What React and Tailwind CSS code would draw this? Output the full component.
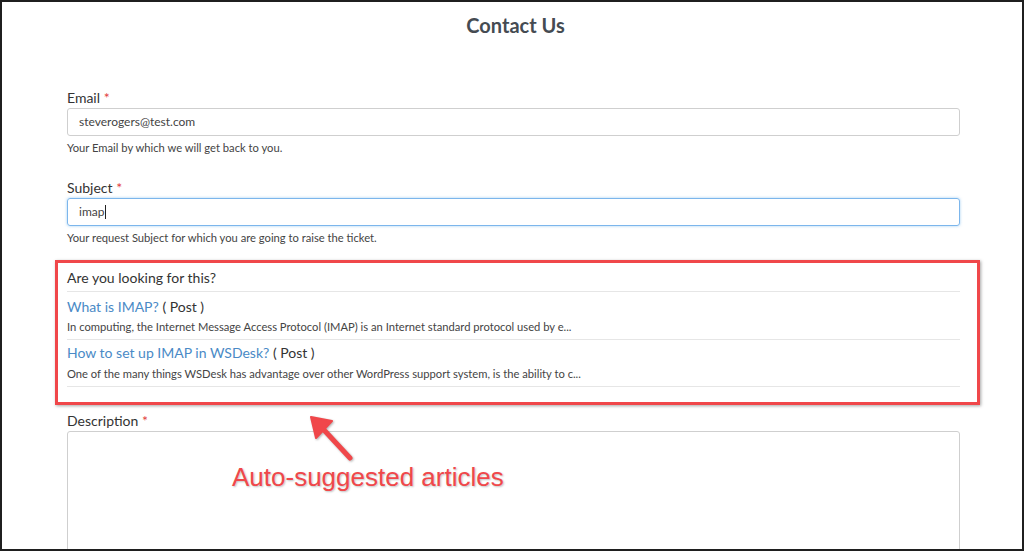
import React from "react";

const font = { fontFamily: "Lato, 'Open Sans', sans-serif" };

function Label({ children, className = "" }) {
  return (
    <div className={"text-[14px] leading-[18px] text-[#333] " + className}>
      {children} <span className="text-[#e2413f]">*</span>
    </div>
  );
}

function Help({ children, className = "" }) {
  return <div className={"text-[11.2px] leading-[16px] text-[#444] " + className}>{children}</div>;
}

export default function App() {
  return (
    <div
      className="relative w-[1024px] h-[551px] overflow-hidden bg-white border-2 border-[#1f1f1f] box-border"
      style={font}
    >
      <div className="pl-[65px] pr-[62px] pt-[10px]">
        <h1 className="text-center text-[20px] leading-[26px] font-bold text-[#454b52] pl-[4px]">Contact Us</h1>

        <Label className="mt-[51px]">Email</Label>
        <div className="mt-[1px] h-[28px] border border-[#cfcfcf] rounded-[3px] flex items-center pl-[11px] text-[12px] text-[#444]">
          steverogers@test.com
        </div>
        <Help className="mt-[4px]">Your Email by which we will get back to you.</Help>

        <Label className="mt-[23px]">Subject</Label>
        <div className="mt-[1px] h-[28px] border border-[#7cb6ec] rounded-[3px] shadow-[0_0_3px_rgba(102,175,233,0.6)] flex items-center pl-[11px] text-[12px] text-[#444]">
          imap<span className="inline-block w-[1px] h-[14px] bg-[#222] ml-[1px]"></span>
        </div>
        <Help className="mt-[4px]">Your request Subject for which you are going to raise the ticket.</Help>

        <div className="mt-[23px]">
          <div className="text-[14px] leading-[18px] text-[#333] pb-[4px] border-b border-[#e6e6e6]">
            Are you looking for this?
          </div>
          <div className="pt-[6px] pb-[4px] border-b border-[#e6e6e6]">
            <div className="text-[14px] leading-[18px] text-[#333]">
              <span className="text-[#4a8ac6]">What is IMAP?</span> ( Post )
            </div>
            <Help className="mt-[3px]">
              In computing, the Internet Message Access Protocol (IMAP) is an Internet standard protocol used by e...
            </Help>
          </div>
          <div className="pt-[4px] pb-[4px] border-b border-[#e6e6e6]">
            <div className="text-[14px] leading-[18px] text-[#333]">
              <span className="text-[#4a8ac6]">How to set up IMAP in WSDesk?</span> ( Post )
            </div>
            <Help className="mt-[4px]">
              One of the many things WSDesk has advantage over other WordPress support system, is the ability to c...
            </Help>
          </div>
        </div>

        <Label className="mt-[25px]">Description</Label>
        <div className="mt-[1px] h-[160px] border border-[#cfcfcf] rounded-[3px]"></div>
      </div>

      {/* annotation overlay */}
      <div className="absolute left-[53px] top-[258px] w-[925px] h-[145px] border-[3px] border-[#f0474a] shadow-[1px_1px_3px_rgba(0,0,0,0.35)]"></div>

      <svg className="absolute left-0 top-0" width="1020" height="547" viewBox="2 2 1020 547">
        <g style={{ filter: "drop-shadow(1px 1px 1px rgba(0,0,0,0.3))" }}>
          <line x1="324" y1="430" x2="350" y2="458" stroke="#f0474a" strokeWidth="5" strokeLinecap="round" />
          <polygon points="311,417 332,421 316,438" fill="#f0474a" stroke="#f0474a" strokeWidth="2" strokeLinejoin="round" />
        </g>
      </svg>

      <div
        className="absolute left-[230px] top-[462px] text-[26px] leading-[26px] text-[#f0474a] whitespace-nowrap [text-shadow:1px_1px_2px_rgba(0,0,0,0.25)]"
        style={{ fontFamily: "'Liberation Sans', Arial, sans-serif" }}
      >
        Auto-suggested articles
      </div>
    </div>
  );
}
